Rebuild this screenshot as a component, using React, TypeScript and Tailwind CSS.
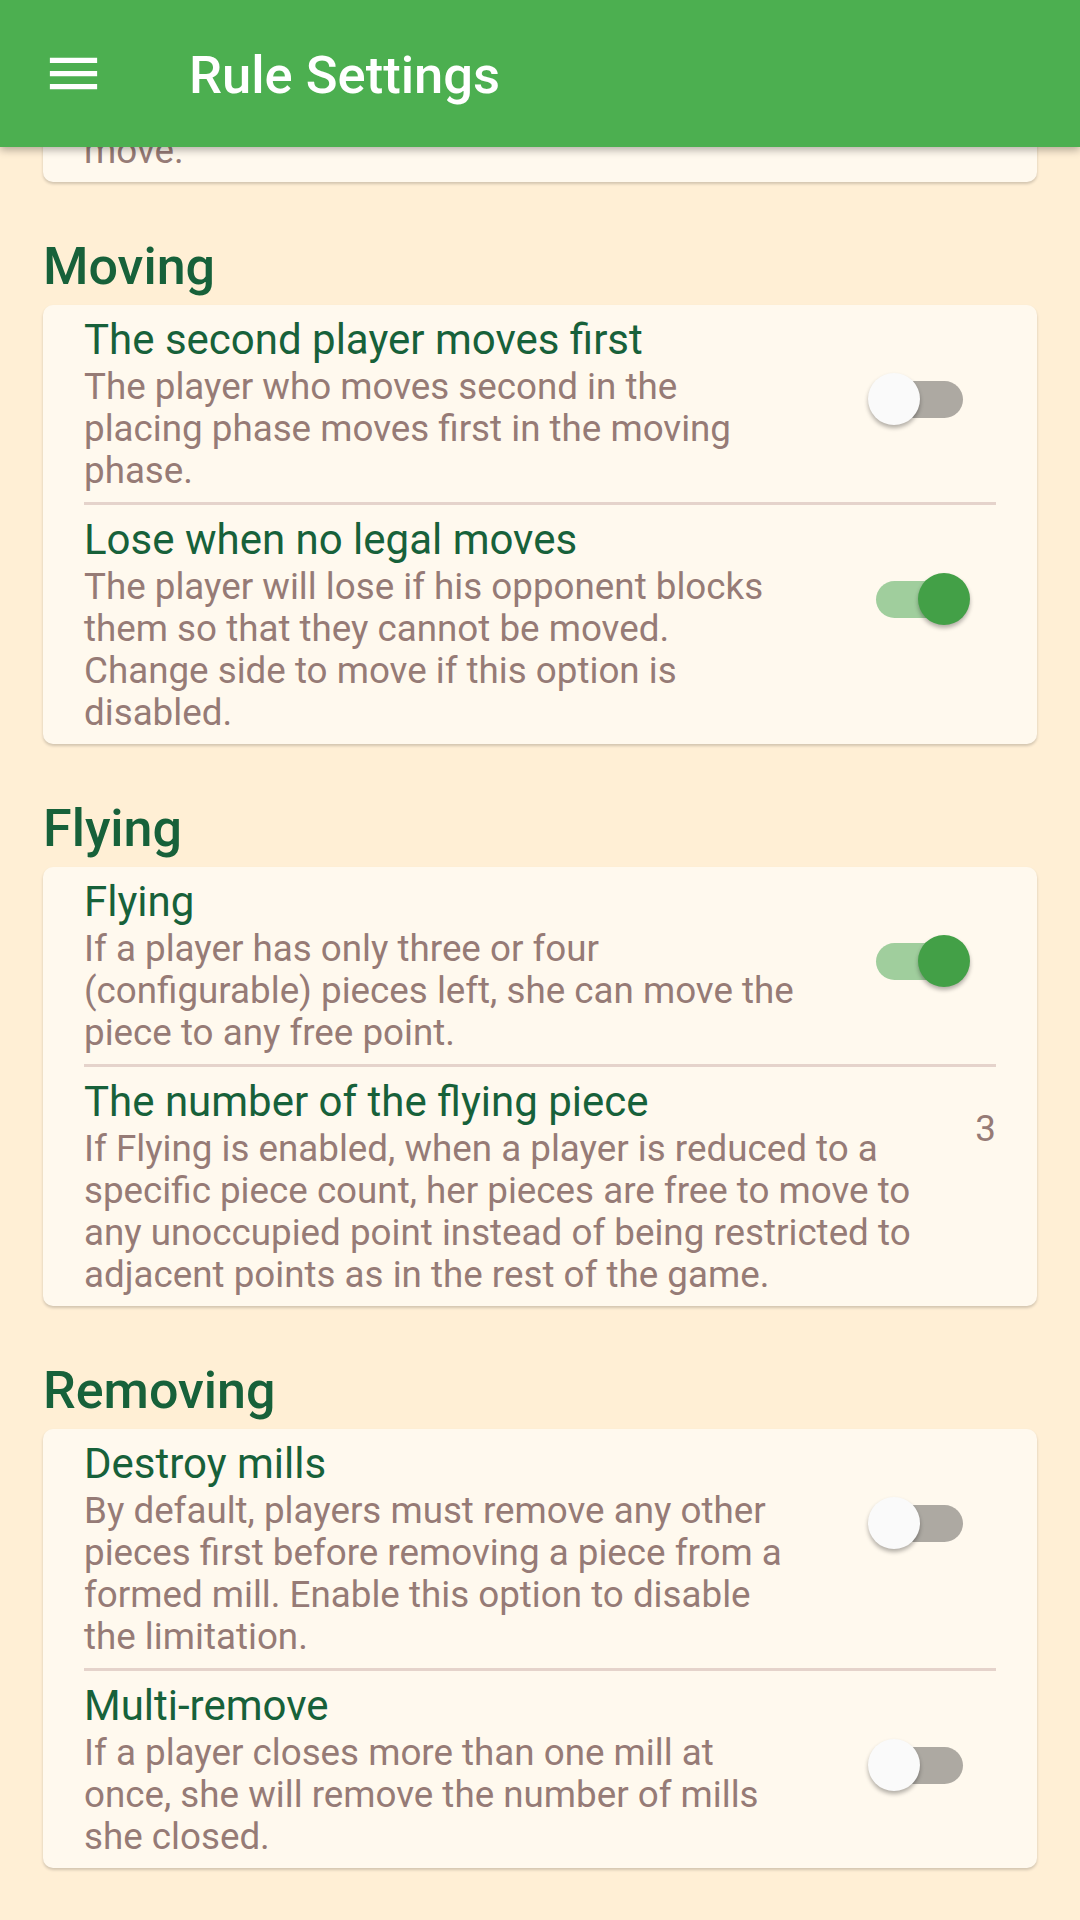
import React from 'react';

type Item = {
  title: string;
  desc: string;
  on?: boolean;
  value?: string;
};

type Section = {
  heading: string;
  items: Item[];
};

const sections: Section[] = [
  {
    heading: 'Moving',
    items: [
      {
        title: 'The second player moves first',
        desc: 'The player who moves second in the placing phase moves first in the moving phase.',
        on: false,
      },
      {
        title: 'Lose when no legal moves',
        desc: 'The player will lose if his opponent blocks them so that they cannot be moved. Change side to move if this option is disabled.',
        on: true,
      },
    ],
  },
  {
    heading: 'Flying',
    items: [
      {
        title: 'Flying',
        desc: 'If a player has only three or four (configurable) pieces left, she can move the piece to any free point.',
        on: true,
      },
      {
        title: 'The number of the flying piece',
        desc: 'If Flying is enabled, when a player is reduced to a specific piece count, her pieces are free to move to any unoccupied point instead of being restricted to adjacent points as in the rest of the game.',
        value: '3',
      },
    ],
  },
  {
    heading: 'Removing',
    items: [
      {
        title: 'Destroy mills',
        desc: 'By default, players must remove any other pieces first before removing a piece from a formed mill. Enable this option to disable the limitation.',
        on: false,
      },
      {
        title: 'Multi-remove',
        desc: 'If a player closes more than one mill at once, she will remove the number of mills she closed.',
        on: false,
      },
    ],
  },
];

const Toggle = ({ on }: { on: boolean }) => (
  <div className="relative w-[154px] h-[52px] mt-[58px] ml-[3px] shrink-0">
    <div
      className={
        on
          ? 'absolute left-[34px] top-[7.5px] w-[87px] h-[37px] rounded-full bg-[#A0CE9D]'
          : 'absolute left-[34px] top-[7.5px] w-[87px] h-[37px] rounded-full bg-[#ADA9A2]'
      }
    />
    <div
      className={
        on
          ? 'absolute left-[76px] top-0 w-[52px] h-[52px] rounded-full bg-[#43A047] shadow-[0_3px_4px_rgba(0,0,0,0.3)]'
          : 'absolute left-[26px] top-0 w-[52px] h-[52px] rounded-full bg-[#FAFAFA] shadow-[0_3px_4px_rgba(0,0,0,0.3)]'
      }
    />
  </div>
);

const SettingRow = ({ item }: { item: Item }) => (
  <div className="flex gap-[42px] py-[10px]">
    <div className="flex-1 min-w-0">
      <p className="text-[42px] leading-[49px] text-[#17613A]">{item.title}</p>
      <p className="mt-[2px] text-[36.75px] leading-[42px] text-[#967B76]">{item.desc}</p>
    </div>
    {item.value !== undefined ? (
      <span className="mt-[31px] text-[36.75px] leading-[42px] text-[#967B76]">{item.value}</span>
    ) : (
      <Toggle on={!!item.on} />
    )}
  </div>
);

const Card = ({ children, className = '' }: { children: React.ReactNode; className?: string }) => (
  <div className={`rounded-[10px] bg-[#FFF9EE] px-[41px] shadow-[0_2px_3px_rgba(0,0,0,0.18)] ${className}`}>
    {children}
  </div>
);

export default function App() {
  return (
    <div className="min-h-screen bg-[#FFEFD5] font-['Roboto',sans-serif] overflow-hidden">
      {/* app bar, content scrolls under it */}
      <header className="fixed top-0 inset-x-0 z-10 h-[147px] bg-[#4CAF50] flex items-center pl-[42px] shadow-[0_3px_8px_rgba(0,0,0,0.3)]">
        <svg viewBox="0 0 24 24" className="w-[63px] h-[63px] fill-white">
          <path d="M3 18h18v-2H3v2zm0-5h18v-2H3v2zm0-7v2h18V6H3z" />
        </svg>
        <h1 className="ml-[84px] pt-[4px] text-[52.5px] leading-[61px] font-medium text-white">
          Rule Settings
        </h1>
      </header>

      <main className="px-[43px] pb-[52px]">
        {/* tail of the placing section, scrolled mostly out of view */}
        <Card className="rounded-t-none pt-[130px] pb-[10px]">
          <p className="text-[36.75px] leading-[42px] text-[#967B76]">move.</p>
        </Card>

        {sections.map((s) => (
          <section key={s.heading}>
            <h2 className="mt-[54px] mb-[8px] text-[52px] leading-[61px] font-medium text-[#17613A]">
              {s.heading}
            </h2>
            <Card>
              {s.items.map((item, i) => (
                <div key={item.title}>
                  {i > 0 && <div className="h-[3px] bg-[#E5D3CB]" />}
                  <SettingRow item={item} />
                </div>
              ))}
            </Card>
          </section>
        ))}
      </main>
    </div>
  );
}
